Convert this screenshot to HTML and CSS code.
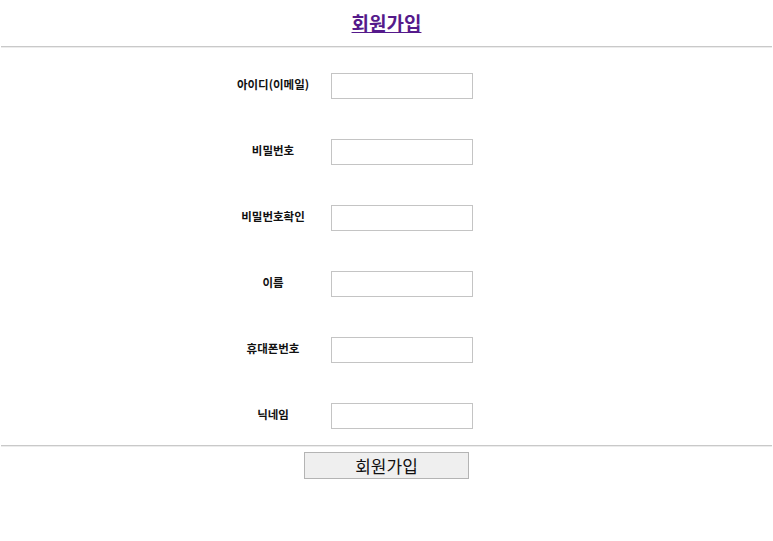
FILE: index.html
```html
<!DOCTYPE html>
<html lang="ko">
<head>
<meta charset="utf-8">
<link rel="stylesheet" href="styles.css">
</head>
<body>
<header class="head"><a class="title" href="#">회원가입</a></header>
<hr class="rule">
<form class="form">
  <div class="row"><span class="label">아이디(이메일)</span><input class="field" type="text"></div>
  <div class="row"><span class="label">비밀번호</span><input class="field" type="password"></div>
  <div class="row"><span class="label">비밀번호확인</span><input class="field" type="password"></div>
  <div class="row"><span class="label">이름</span><input class="field" type="text"></div>
  <div class="row"><span class="label">휴대폰번호</span><input class="field" type="text"></div>
  <div class="row"><span class="label">닉네임</span><input class="field" type="text"></div>
</form>
<hr class="rule">
<div class="actions"><button class="submit" type="button">회원가입</button></div>
</body>
</html>
```
FILE: styles.css
```css
html, body {
  margin: 0;
  padding: 0;
  background: #fff;
  font-family: "Noto Sans CJK KR", "Noto Sans", sans-serif;
}
.head {
  height: 46px;
  display: flex;
  justify-content: center;
  align-items: center;
}
.title {
  color: #551a8b;
  font-size: 19px;
  font-weight: 700;
  text-decoration: underline;
  line-height: 24px;
}
.rule {
  margin: 0 1px;
  height: 0;
  border: 0;
  border-top: 1px solid #c9c9c9;
  border-bottom: 1px solid #ececec;
}
.form {
  display: flex;
  flex-direction: column;
  gap: 40px;
  padding: 25px 0 16px 223px;
}
.row {
  display: flex;
  align-items: center;
  height: 26px;
}
.label {
  width: 100px;
  text-align: center;
  font-size: 11.5px;
  font-weight: 700;
  color: #111;
  margin-right: 8px;
  position: relative;
  top: -2px;
}
.field {
  box-sizing: border-box;
  width: 142px;
  height: 26px;
  margin: 0;
  border: 1px solid #c4c4c4;
  background: #fff;
  padding: 2px 4px;
}
.actions {
  display: flex;
  justify-content: center;
  padding-top: 5px;
}
.submit {
  box-sizing: border-box;
  width: 165px;
  height: 27px;
  margin: 0;
  background: #efefef;
  border: 1px solid #b4b4b4;
  font-family: "Noto Sans CJK KR", sans-serif;
  font-size: 17px;
  color: #111;
  padding: 0;
  line-height: 24px;
}
```
